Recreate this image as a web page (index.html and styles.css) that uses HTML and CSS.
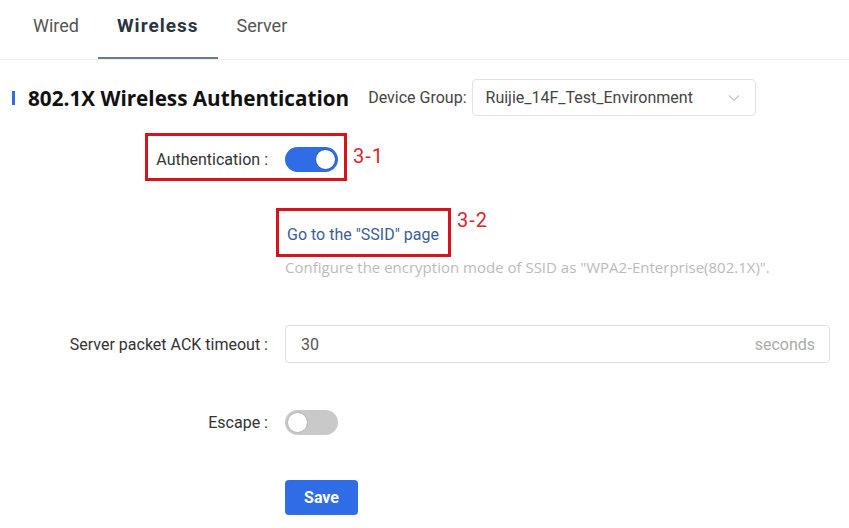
FILE: index.html
```html
<!DOCTYPE html>
<html lang="en">
<head>
  <meta charset="UTF-8" />
  <meta name="viewport" content="width=device-width, initial-scale=1.0" />
  <title>802.1X Wireless Authentication</title>
  <link rel="stylesheet" href="styles.css">
</head>
<body>
  <div class="tabs">
    <div class="tab">Wired</div>
    <div class="tab active">Wireless</div>
    <div class="tab">Server</div>
  </div>

  <div class="title-row">
    <span class="title-bar"></span>
    <h2 class="title">802.1X Wireless Authentication</h2>
    <span class="group-label">Device Group:</span>
    <div class="select">
      <span>Ruijie_14F_Test_Environment</span>
      <svg class="chevron" width="12" height="8" viewBox="0 0 12 8">
        <path d="M1 1.5 L6 6.5 L11 1.5" fill="none" stroke="#c4c4c4" stroke-width="1.2" />
      </svg>
    </div>
  </div>

  <div class="form">
    <div class="row row-auth">
      <div class="label">Authentication :</div>
      <div class="control">
        <span class="switch on"><span class="knob"></span></span>
      </div>
      <div class="mark mark-1"></div>
      <div class="step step-1">3-1</div>
    </div>

    <div class="row row-link">
      <div class="label"></div>
      <div class="control">
        <a class="link" href="#">Go to the "SSID" page</a>
        <div class="mark mark-2"></div>
        <div class="step step-2">3-2</div>
      </div>
    </div>

    <div class="row row-desc">
      <div class="label"></div>
      <div class="control desc">Configure the encryption mode of SSID as "WPA2-Enterprise(802.1X)".</div>
    </div>

    <div class="row row-timeout">
      <div class="label">Server packet ACK timeout :</div>
      <div class="control">
        <div class="input">
          <span>30</span>
          <span class="unit">seconds</span>
        </div>
      </div>
    </div>

    <div class="row row-escape">
      <div class="label">Escape :</div>
      <div class="control">
        <span class="switch"><span class="knob"></span></span>
      </div>
    </div>

    <div class="row row-save">
      <div class="label"></div>
      <div class="control">
        <button class="save">Save</button>
      </div>
    </div>
  </div>
</body>
</html>
```

FILE: styles.css
```css
body {
  font-family: Roboto, "Liberation Sans", sans-serif;
  background: #ffffff;
  color: #333;
  margin: 0;
  padding: 0;
}
.tabs {
  display: flex;
  height: 59px;
  padding-left: 14px;
  border-bottom: 1px solid #f0f0f0;
}
.tab {
  padding: 0 19px;
  font-size: 18px;
  color: #555;
  line-height: 52px;
  height: 59px;
  box-sizing: border-box;
}
.tab.active {
  font-weight: bold;
  font-size: 19px;
  letter-spacing: 1px;
  color: #2b3440;
  border-bottom: 2px solid #6b7a88;
}
.title-row {
  display: flex;
  align-items: center;
  margin-top: 19px;
  padding-left: 12px;
}
.title-bar {
  width: 3px;
  height: 14px;
  background: #2f6ce5;
  margin-right: 13px;
}
.title {
  margin: 0;
  font-family: "Open Sans", sans-serif;
  font-size: 20.7px;
  font-weight: bold;
  color: #111;
}
.group-label {
  margin-left: 19px;
  font-size: 16px;
  color: #444;
}
.select {
  display: flex;
  align-items: center;
  justify-content: space-between;
  box-sizing: border-box;
  width: 284px;
  height: 37px;
  margin-left: 5px;
  padding: 0 15px 0 13px;
  border: 1px solid #e2e2e2;
  border-radius: 4px;
  font-size: 16px;
  color: #444;
}
.form {
  display: flex;
  flex-direction: column;
}
.row {
  display: flex;
  align-items: center;
  position: relative;
}
.label {
  width: 268px;
  flex-shrink: 0;
  text-align: right;
  font-size: 16px;
  color: #333;
}
.control {
  margin-left: 17px;
  position: relative;
}
.row-auth { margin-top: 30px; height: 26px; }
.row-link { margin-top: 52px; height: 20px; }
.row-desc { margin-top: 14px; height: 18px; }
.row-timeout { margin-top: 49px; }
.row-escape { margin-top: 46px; height: 26px; }
.row-save { margin-top: 45px; }
.switch {
  display: block;
  position: relative;
  width: 53px;
  height: 25px;
  border-radius: 13px;
  background: #c9c9c9;
}
.switch .knob {
  position: absolute;
  top: 2px;
  left: 2px;
  width: 21px;
  height: 21px;
  box-sizing: border-box;
  border-radius: 50%;
  background: #fff;
  border: 1px solid #b5b5b5;
}
.switch.on {
  background: #2f6ce5;
}
.switch.on .knob {
  left: 30px;
  border: 1px solid #1f56c4;
}
.mark {
  position: absolute;
  border: 3px solid #d7141d;
  box-sizing: border-box;
}
.mark-1 {
  left: 145px;
  top: -13px;
  width: 202px;
  height: 48px;
}
.mark-2 {
  left: -9px;
  top: -17px;
  width: 175px;
  height: 49px;
}
.step {
  position: absolute;
  white-space: nowrap;
  font-size: 20px;
  letter-spacing: 1px;
  color: #d9262f;
}
.step-1 {
  left: 353px;
  top: -2px;
}
.step-2 {
  left: 172px;
  top: -17px;
}
.link {
  display: inline-block;
  padding-left: 2px;
  font-size: 16px;
  color: #3c5e95;
  text-decoration: none;
}
.desc {
  font-family: "Open Sans", sans-serif;
  font-size: 15px;
  white-space: nowrap;
  color: #bbbbbb;
}
.input {
  display: flex;
  align-items: center;
  justify-content: space-between;
  box-sizing: border-box;
  width: 545px;
  height: 38px;
  padding: 0 14px 0 15px;
  border: 1px solid #e0e0e0;
  border-radius: 4px;
  font-size: 16px;
  color: #555;
}
.unit {
  color: #aaa;
}
.save {
  width: 73px;
  height: 35px;
  border: none;
  border-radius: 4px;
  background: #2f6ce5;
  color: #fff;
  font-family: Roboto, sans-serif;
  font-size: 16px;
  font-weight: bold;
  cursor: pointer;
}
```
